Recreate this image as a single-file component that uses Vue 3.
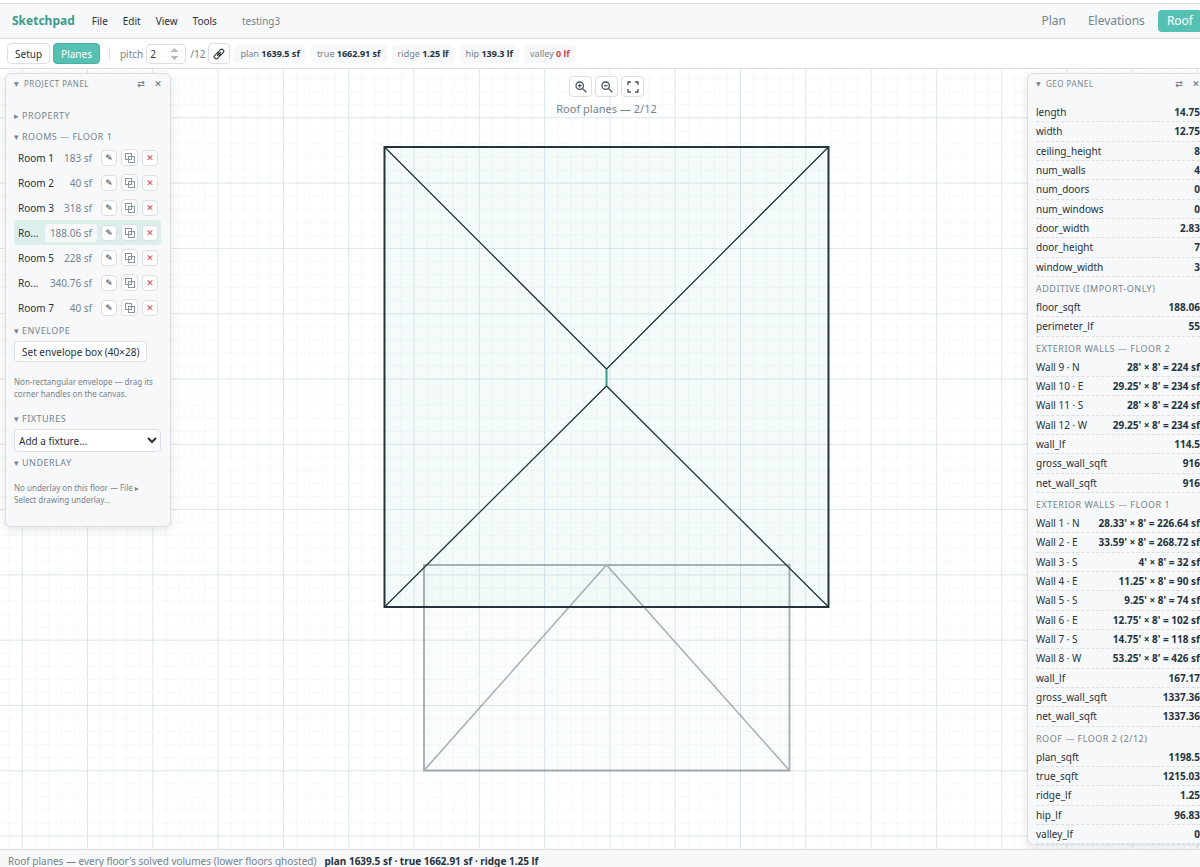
<script setup>
import { ref } from 'vue'

const pitch = ref(2)
const menus = ['File', 'Edit', 'View', 'Tools']
const totals = [
  { name: 'plan', value: '1639.5 sf' },
  { name: 'true', value: '1662.91 sf' },
  { name: 'ridge', value: '1.25 lf' },
  { name: 'hip', value: '139.3 lf' },
  { name: 'valley', value: '0 lf', warn: true },
]
const rooms = [
  { name: 'Room 1', area: '183 sf' },
  { name: 'Room 2', area: '40 sf' },
  { name: 'Room 3', area: '318 sf' },
  { name: 'Ro...', area: '188.06 sf', active: true },
  { name: 'Room 5', area: '228 sf' },
  { name: 'Ro...', area: '340.76 sf' },
  { name: 'Room 7', area: '40 sf' },
]
const geo = [
  { rows: [['length', '14.75'], ['width', '12.75'], ['ceiling_height', '8'], ['num_walls', '4'], ['num_doors', '0'], ['num_windows', '0'], ['door_width', '2.83'], ['door_height', '7'], ['window_width', '3']] },
  { title: 'Additive (import-only)', rows: [['floor_sqft', '188.06'], ['perimeter_lf', '55']] },
  { title: 'Exterior walls — Floor 2', rows: [['Wall 9 · N', "28' × 8' = 224 sf"], ['Wall 10 · E', "29.25' × 8' = 234 sf"], ['Wall 11 · S', "28' × 8' = 224 sf"], ['Wall 12 · W', "29.25' × 8' = 234 sf"], ['wall_lf', '114.5'], ['gross_wall_sqft', '916'], ['net_wall_sqft', '916']] },
  { title: 'Exterior walls — Floor 1', rows: [['Wall 1 · N', "28.33' × 8' = 226.64 sf"], ['Wall 2 · E', "33.59' × 8' = 268.72 sf"], ['Wall 3 · S', "4' × 8' = 32 sf"], ['Wall 4 · E', "11.25' × 8' = 90 sf"], ['Wall 5 · S', "9.25' × 8' = 74 sf"], ['Wall 6 · E', "12.75' × 8' = 102 sf"], ['Wall 7 · S', "14.75' × 8' = 118 sf"], ['Wall 8 · W', "53.25' × 8' = 426 sf"], ['wall_lf', '167.17'], ['gross_wall_sqft', '1337.36'], ['net_wall_sqft', '1337.36']] },
  { title: 'Roof — Floor 2 (2/12)', rows: [['plan_sqft', '1198.5'], ['true_sqft', '1215.03'], ['ridge_lf', '1.25'], ['hip_lf', '96.83'], ['valley_lf', '0']] },
]

// Grid: one minor line per foot, one major line every five feet.
const foot = 13.06
const lines = (origin, max) => {
  const out = []
  for (let i = -8; origin + i * foot < max; i++) {
    if (origin + i * foot >= 0) out.push({ at: origin + i * foot, major: i % 5 === 0 })
  }
  return out
}
const verticals = lines(22.2, 1200)
const horizontals = lines(48.8, 781)
</script>

<template>
  <div class="app">
    <header class="menubar">
      <strong class="brand">Sketchpad</strong>
      <nav class="menus">
        <button v-for="m in menus" :key="m" type="button">{{ m }}</button>
      </nav>
      <span class="doc">testing3</span>
      <nav class="views">
        <button type="button">Plan</button>
        <button type="button">Elevations</button>
        <button type="button" class="on">Roof</button>
      </nav>
    </header>

    <div class="toolbar">
      <button type="button" class="btn">Setup</button>
      <button type="button" class="btn on">Planes</button>
      <span class="rule"></span>
      <label for="pitch">pitch</label>
      <input id="pitch" v-model="pitch" type="number" />
      <span class="per">/12</span>
      <button type="button" class="btn link" aria-label="Link pitch">
        <svg width="12" height="12" viewBox="0 0 12 12" fill="none" stroke="#26323c" stroke-width="1.1">
          <g transform="rotate(-45 6 6)">
            <rect x="0.2" y="4" width="6.6" height="4" rx="1.6" />
            <rect x="5.2" y="4" width="6.6" height="4" rx="1.6" />
            <path d="M3.4 6h5.2" />
          </g>
        </svg>
      </button>
      <div class="chips">
        <span v-for="t in totals" :key="t.name" class="chip">{{ t.name }} <b :class="{ warn: t.warn }">{{ t.value }}</b></span>
      </div>
    </div>

    <main class="stage">
      <svg class="drawing" viewBox="0 0 1200 781" preserveAspectRatio="xMidYMin slice">
        <g>
          <line v-for="l in verticals" :key="'v' + l.at" :x1="l.at" :x2="l.at" y1="0" y2="781" :class="l.major ? 'major' : 'minor'" />
          <line v-for="l in horizontals" :key="'h' + l.at" x1="0" x2="1200" :y1="l.at" :y2="l.at" :class="l.major ? 'major' : 'minor'" />
        </g>
        <g class="ghost">
          <rect x="424" y="496" width="365.5" height="205.5" />
          <path d="M424 701.5L606.5 496L789.5 701.5" />
        </g>
        <g class="roof">
          <rect x="384.5" y="78" width="444" height="460" />
          <path d="M384.5 78L606.5 300L828.5 78M384.5 538L606.5 317L828.5 538" />
          <path class="ridge" d="M606.5 300V317" />
        </g>
      </svg>

      <div class="viewtools">
        <div class="zooms">
          <button type="button" aria-label="Zoom in">
            <svg width="12" height="12" viewBox="0 0 12 12"><circle cx="4.7" cy="4.7" r="3.7" /><path d="M7.5 7.5L11.3 11.3M4.7 2.9V6.5M2.9 4.7H6.5" /></svg>
          </button>
          <button type="button" aria-label="Zoom out">
            <svg width="12" height="12" viewBox="0 0 12 12"><circle cx="4.7" cy="4.7" r="3.7" /><path d="M7.5 7.5L11.3 11.3M2.9 4.7H6.5" /></svg>
          </button>
          <button type="button" aria-label="Fit to view">
            <svg width="12" height="12" viewBox="0 0 12 12"><path d="M1 4V1H4M8 1H11V4M11 8V11H8M4 11H1V8" /></svg>
          </button>
        </div>
        <div class="caption">Roof planes — 2/12</div>
      </div>

      <aside class="panel project">
        <div class="head">
          <span class="tri">▼</span><span class="title">Project panel</span>
          <button type="button" class="swap" aria-label="Dock other side">⇄</button>
          <button type="button" aria-label="Close">✕</button>
        </div>
        <h3><span class="tri">▸</span>Property</h3>
        <h3><span class="tri">▾</span>Rooms — Floor 1</h3>
        <ul class="rooms">
          <li v-for="(r, i) in rooms" :key="i" :class="{ active: r.active }">
            <span class="name">{{ r.name }}</span>
            <span class="area">{{ r.area }}</span>
            <button type="button" aria-label="Rename">✎</button>
            <button type="button" class="copy" aria-label="Duplicate">
              <svg width="10" height="10" viewBox="0 0 10 10" fill="none" stroke="#8a959d" stroke-width="1"><rect x="0.5" y="0.5" width="6" height="6" /><rect x="3.5" y="3.5" width="6" height="6" /></svg>
            </button>
            <button type="button" class="del" aria-label="Delete">✕</button>
          </li>
        </ul>
        <h3><span class="tri">▾</span>Envelope</h3>
        <button type="button" class="btn env">Set envelope box (40×28)</button>
        <p>Non-rectangular envelope — drag its corner handles on the canvas.</p>
        <h3><span class="tri">▾</span>Fixtures</h3>
        <select aria-label="Add a fixture"><option>Add a fixture...</option></select>
        <h3><span class="tri">▾</span>Underlay</h3>
        <p>No underlay on this floor — File ▸ <br />Select drawing underlay...</p>
      </aside>

      <aside class="panel geo">
        <div class="head">
          <span class="tri">▼</span><span class="title">Geo panel</span>
          <button type="button" class="swap" aria-label="Dock other side">⇄</button>
          <button type="button" aria-label="Close">✕</button>
        </div>
        <div class="facts">
          <template v-for="(g, i) in geo" :key="i">
            <h4 v-if="g.title">{{ g.title }}</h4>
            <div v-for="row in g.rows" :key="row[0]" class="fact"><span>{{ row[0] }}</span><b>{{ row[1] }}</b></div>
          </template>
        </div>
      </aside>
    </main>

    <footer class="status">
      <span>Roof planes — every floor's solved volumes (lower floors ghosted)</span>
      <b>plan 1639.5 sf · true 1662.91 sf · ridge 1.25 lf</b>
    </footer>
  </div>
</template>

<style>
body { overflow: hidden; }
</style>

<style scoped>
.app, .app * { box-sizing: border-box; }
.app { display: flex; flex-direction: column; height: 100vh; overflow: hidden; padding-top: 3px; background: #fff; color: #26323c; font: 12px/16px "Noto Sans", "DejaVu Sans", sans-serif; }
button, input, select { font: inherit; color: inherit; margin: 0; }
button { border: 0; background: none; padding: 0; white-space: nowrap; }

.menubar { display: flex; align-items: center; flex: none; height: 36px; padding-left: 12px; border: solid #d9dee2; border-width: 1px 0; background: #f6f8fa; }
.brand { color: #3c9a8a; font-size: 12px; }
.menus { display: flex; gap: 15px; margin-left: 17px; font-size: 10px; }
.doc { margin-left: 25px; color: #77838d; font-size: 10px; }
.views { display: flex; gap: 4px; margin: 0 -2px 0 auto; }
.views button { padding: 3px 9px; color: #77838d; border-radius: 4px; }
.views .on { background: #56c0b3; color: #fff; }

.toolbar { display: flex; align-items: center; flex: none; height: 30px; padding-left: 7px; border-bottom: 1px solid #d9dee2; font-size: 10px; color: #77838d; }
.btn { height: 21px; padding: 0 7px; border: 1px solid #d9dfe4; border-radius: 4px; background: #fff; color: #26323c; font-size: 10px; }
.toolbar .on { margin-left: 3px; background: #56c0b3; border-color: #4bb0a3; color: #fff; }
.rule { width: 1px; height: 13px; margin: 0 10px 0 9px; background: #d9dee2; }
.toolbar input { width: 40px; height: 20px; margin: 0 4px 0 3px; padding: 0 3px; border: 1px solid #d9dfe4; border-radius: 4px; background: #fff; color: #26323c; }
.toolbar input::-webkit-inner-spin-button { opacity: 0.6; }
.toolbar .link { display: flex; align-items: center; justify-content: center; width: 22px; margin-left: 3px; padding: 0; }
.chips { display: flex; gap: 5px; margin-left: 4px; font-size: 9px; }
.chip { padding: 1px 6px; border-radius: 4px; background: #f6f8fa; white-space: nowrap; }
.chip b { color: #26323c; }
.chip .warn { color: #d63f50; }

.stage { position: relative; flex: 1; min-height: 0; overflow: hidden; }
.drawing { display: block; width: 100%; height: 100%; }
.minor { stroke: #f4f8f9; stroke-width: 1; }
.major { stroke: #dce6ea; stroke-width: 1; }
.roof { stroke: #26323c; fill: none; stroke-width: 1.3; }
.roof rect { fill: #56c0b3; fill-opacity: 0.06; stroke-width: 2; }
.roof .ridge { stroke: #3c9a8a; stroke-width: 2; }
.ghost { opacity: 0.38; stroke: #26323c; fill: none; stroke-width: 1.6; }
.ghost rect { fill: #56c0b3; fill-opacity: 0.06; stroke-width: 2; }

.viewtools { position: absolute; top: 7px; left: 0; right: 0; display: flex; flex-direction: column; align-items: center; gap: 4px; padding-left: 13px; pointer-events: none; }
.zooms { display: flex; gap: 3px; }
.zooms button { display: grid; place-items: center; width: 23px; height: 21px; border: 1px solid #d9dfe4; border-radius: 4px; background: #fff; }
.zooms svg { fill: none; stroke: #4a555f; stroke-width: 1.3; }
.caption { color: #77838d; font-size: 11px; }

.panel { position: absolute; top: 4px; background: #f6f8fa; border: 1px solid #d9dfe4; border-radius: 6px; box-shadow: 0 3px 10px rgba(38, 50, 60, 0.12); }
.head { display: flex; align-items: center; height: 20px; color: #77838d; font-size: 8px; }
.head .title { flex: 1; text-transform: uppercase; letter-spacing: 0.5px; }
.head .tri { width: 10px; font-size: 6px; }
.head button { width: 12px; margin-left: 5px; font-size: 9px; color: #5f6b75; }
.project { left: 5px; width: 166px; padding: 0 9px 20px 8px; }
.project .head { margin-right: -3px; }
h3, h4 { margin: 0; font-weight: 400; color: #77838d; text-transform: uppercase; letter-spacing: 0.5px; }
h3 { font-size: 9px; line-height: 21px; }
h3 .tri { display: inline-block; width: 8px; font-size: 9px; letter-spacing: 0; }
.head + h3 { margin-top: 11px; }
.rooms { list-style: none; margin: -2px 0 0; padding: 0; }
.rooms li { display: flex; align-items: center; height: 25px; padding: 0 3px 0 4px; border-radius: 4px; }
.rooms .active { background: #dcefed; }
.name { flex: 1; font-size: 10px; white-space: nowrap; }
.area { padding: 1px 5px; border-radius: 4px; background: #f6f8fa; color: #77838d; font-size: 10px; white-space: nowrap; }
.rooms button { display: grid; place-items: center; width: 16px; height: 16px; margin-left: 4px; border: 1px solid #d9dfe4; border-radius: 4px; background: #fff; font-size: 9px; line-height: 9px; }
.rooms .copy { width: 17px; height: 17px; }
.rooms .del { color: #d63f50; }
.env { display: block; }
p { margin: 14px 0 8px; color: #77838d; font-size: 8px; line-height: 12px; }
h3 + p { margin-top: 9px; }
select { display: block; width: 100%; height: 23px; padding: 0; border: 1px solid #d9dfe4; border-radius: 4px; background: #fff; font-size: 10px; }
.project p:last-child { margin-bottom: 0; }

.geo { right: -8px; bottom: 4px; width: 181px; display: flex; flex-direction: column; padding: 0 7px 0 8px; }
.geo .head { margin-right: -2px; }
.facts { display: flex; flex-direction: column; flex: 1; min-height: 0; margin-top: 9px; }
.fact { display: flex; align-items: center; justify-content: space-between; flex: 1 0 auto; border-bottom: 1px dashed #d9dfe4; font-size: 10px; white-space: nowrap; }
h4 { flex: none; padding: 4px 0 2px; font-size: 9px; line-height: 15px; }

.status { flex: none; display: flex; gap: 8px; height: 18px; padding: 4px 8px 0; border-top: 1px solid #d9dee2; background: #f6f8fa; font-size: 10px; line-height: 14px; white-space: nowrap; }
.status span { color: #77838d; }
</style>
